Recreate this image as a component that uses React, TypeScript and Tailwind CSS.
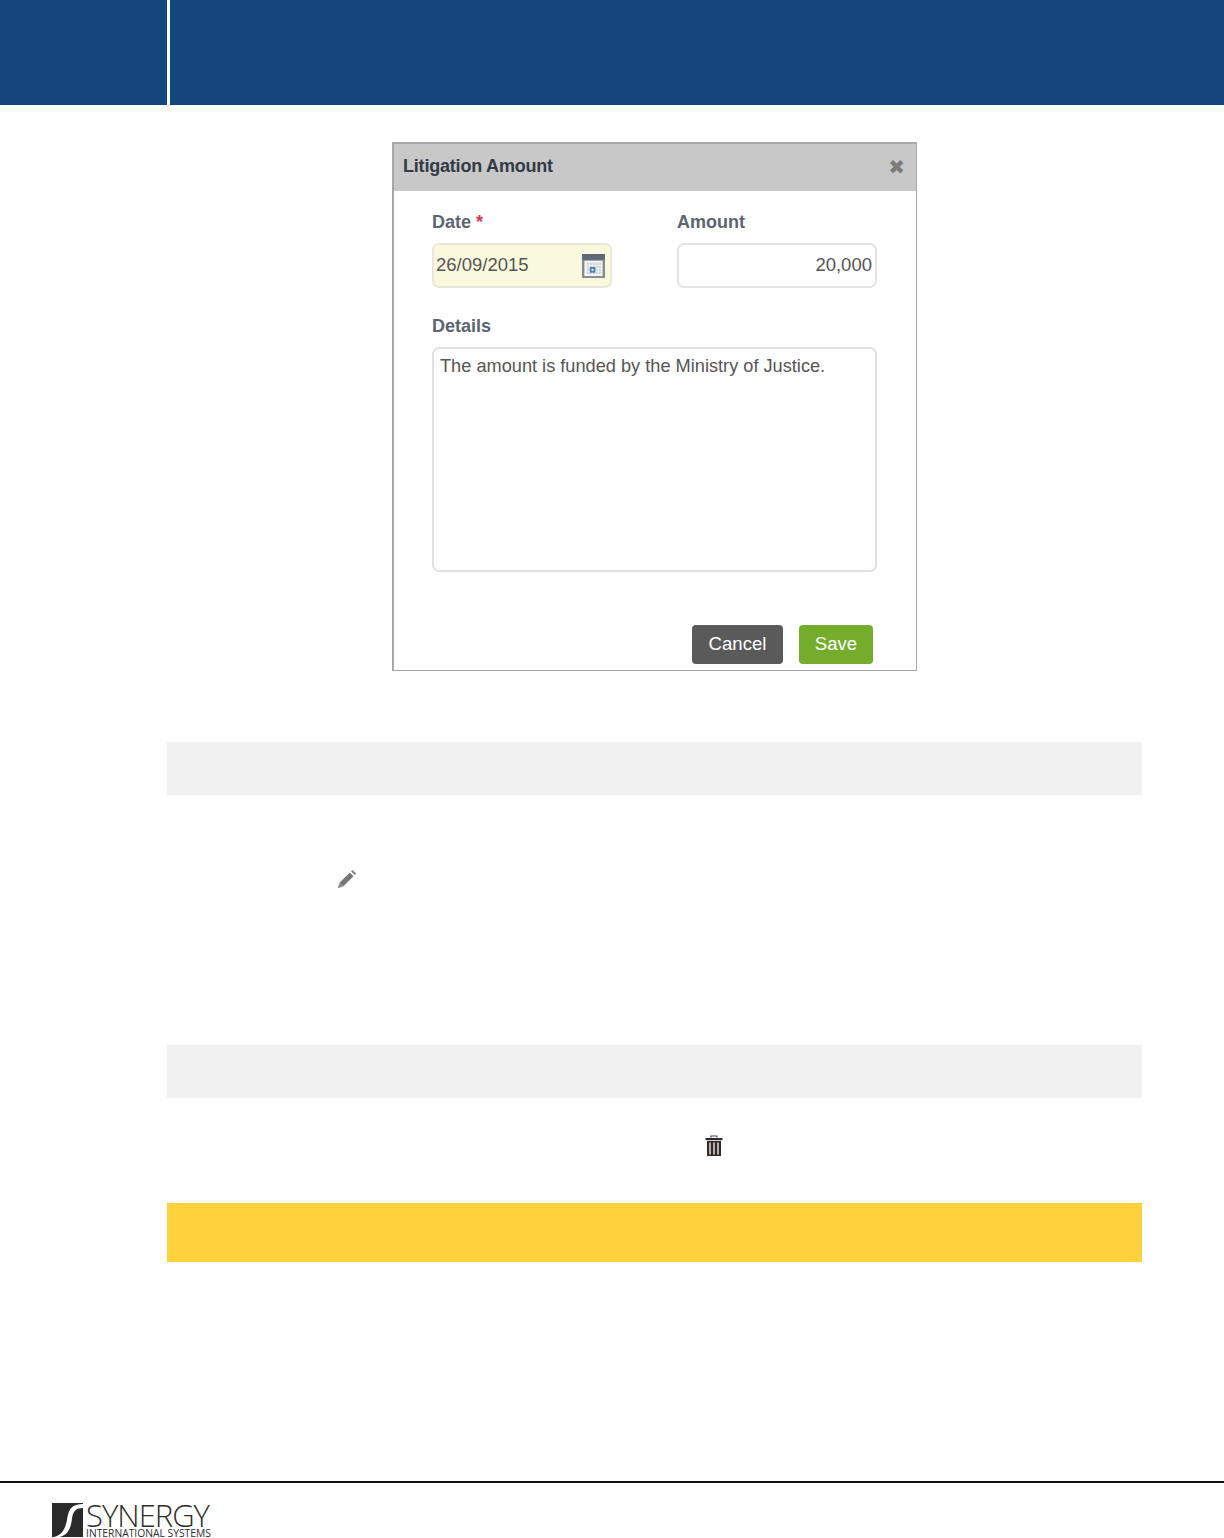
import React from "react";

function CalendarIcon() {
  return (
    <svg width="23" height="24" viewBox="0 0 24 25" className="block">
      <rect x="0" y="0" width="24" height="25" fill="#808b94" />
      <rect x="0" y="0" width="24" height="6" fill="#5d6b78" />
      <rect x="2.500" y="7" width="19" height="16" fill="#f4f5f3" />
      <rect x="5" y="9" width="15" height="12" fill="#d4d6d8" />
      <path d="M5 12h15M5 15h15M5 18h15M8 9v12M11 9v12M14 9v12M17 9v12" stroke="#f0f0f0" strokeWidth="1" />
      <rect x="8" y="13.500" width="6" height="6" fill="#4a86b8" />
      <rect x="10" y="15.500" width="2" height="2" fill="#dfeaf3" />
    </svg>
  );
}

function PencilIcon() {
  return (
    <svg width="22" height="22" viewBox="0 0 22 22" className="block">
      <path d="M3.500 14.800 13.800 4.500l3.700 3.700L7.200 18.500z" fill="#777" />
      <path d="M1.800 20.200l1.700-5.400 3.700 3.700z" fill="#8a8a8a" />
      <path d="M15 3.300l1.400-1.300 3.600 3.600-1.300 1.400z" fill="#7d7d7d" />
    </svg>
  );
}

function TrashIcon() {
  return (
    <svg width="18" height="22" viewBox="0 0 18 22" className="block">
      <path d="M6 2.500V1h6v1.500" fill="none" stroke="#444" strokeWidth="1.200" />
      <rect x="0.500" y="3" width="17" height="2.200" fill="#2a2a2a" />
      <rect x="2" y="6" width="14" height="15" fill="#2e2a2a" />
      <path d="M5 7.500v12M9 7.500v12M13 7.500v12" stroke="#cdbcb8" strokeWidth="1.800" />
    </svg>
  );
}

function SynergyLogo() {
  return (
    <div className="flex items-start gap-[3px]">
      <svg width="31" height="34" viewBox="0 0 31 34" className="block shrink-0">
        <rect x="0" y="0" width="31" height="34" fill="#2a2a2a" />
        <path d="M31 1C20 1 17 6 15.500 14 14 24 11 32 2 34h5.500C16 32 19 25 20 15.500 21 8 24 5 31 5z" fill="#fff" />
      </svg>
      <div className="flex flex-col font-['Open_Sans',sans-serif] text-[#2d2d2d]">
        <span className="text-[31px] h-[25px] leading-[25px] font-light tracking-[-1px] whitespace-nowrap">SYNERGY</span>
        <span className="text-[10.300px] h-[10px] leading-[10px] font-normal whitespace-nowrap">INTERNATIONAL SYSTEMS</span>
      </div>
    </div>
  );
}

const label = "text-[18px] leading-[20px] font-bold text-[#5b6470]";
const field = "text-[18.500px] leading-[22px] text-[#555] pb-[2px]";

export default function App() {
  return (
    <div className="h-[1538px] w-[1224px] overflow-hidden bg-white flex flex-col font-['Liberation_Sans',Arial,sans-serif]">
      <header className="h-[105px] bg-[#14457c] flex shrink-0">
        <div className="w-[167px]" />
        <div className="w-[3px] bg-white" />
      </header>

      <section className="mt-[37px] ml-[392px] w-[525px] h-[529px] border-t-2 border-l-2 border-r border-b border-[#a8a8a8] flex flex-col shrink-0">
        <div className="h-[47px] bg-[#c8c8c8] flex items-center justify-between pl-[9px] pr-[11px] pb-[2px] shrink-0">
          <h2 className="text-[18px] font-bold text-[#333b47] tracking-[-0.2px]">Litigation Amount</h2>
          <span className="text-[#7c7c7c] text-[20px] font-bold leading-none font-['DejaVu_Sans',sans-serif]">✖</span>
        </div>
        <div className="flex-1 pl-[38px] pr-[39px] pt-[21px] flex flex-col">
          <div className="flex gap-[65px]">
            <div className="w-[180px]">
              <div className={label}>
                Date <span className="text-[#e0354b]">*</span>
              </div>
              <div className="mt-[11px] h-[45px] rounded-[7px] border-2 border-[#e8e8da] bg-[#fbf9dd] flex items-center justify-between pl-[2px] pr-[5px]">
                <span className={field}>26/09/2015</span>
                <CalendarIcon />
              </div>
            </div>
            <div className="w-[200px]">
              <div className={label}>Amount</div>
              <div className="mt-[11px] h-[45px] rounded-[7px] border-2 border-[#e4e4e4] flex items-center justify-end pr-[3px]">
                <span className={field}>20,000</span>
              </div>
            </div>
          </div>
          <div className={`${label} mt-[28px]`}>Details</div>
          <div className="mt-[11px] h-[225px] rounded-[7px] border-2 border-[#e2e2e2] px-[6px] pt-[6px]">
            <p className="text-[18.200px] leading-[22px] text-[#555]">The amount is funded by the Ministry of Justice.</p>
          </div>
          <div className="mt-[53px] flex justify-end gap-[16px] pr-[4px]">
            <button className="w-[91px] h-[39px] pb-[2px] rounded-[4px] bg-[#5a5a5a] text-white text-[18.600px]">Cancel</button>
            <button className="w-[74px] h-[39px] pb-[2px] rounded-[4px] bg-[#73ad2b] text-white text-[18.600px]">Save</button>
          </div>
        </div>
      </section>

      <div className="mt-[71px] ml-[167px] w-[975px] h-[53px] bg-[#f1f1f1] shrink-0" />

      <div className="mt-[73px] ml-[336px] shrink-0 h-[22px]">
        <PencilIcon />
      </div>

      <div className="mt-[155px] ml-[167px] w-[975px] h-[53px] bg-[#f1f1f1] shrink-0" />

      <div className="mt-[37px] ml-[705px] shrink-0 h-[22px]">
        <TrashIcon />
      </div>

      <div className="mt-[46px] ml-[167px] w-[975px] h-[59px] bg-[#ffd23c] shrink-0" />

      <div className="mt-[219px] h-[2px] bg-[#111] shrink-0" />

      <div className="mt-[20px] ml-[52px] shrink-0">
        <SynergyLogo />
      </div>
    </div>
  );
}
